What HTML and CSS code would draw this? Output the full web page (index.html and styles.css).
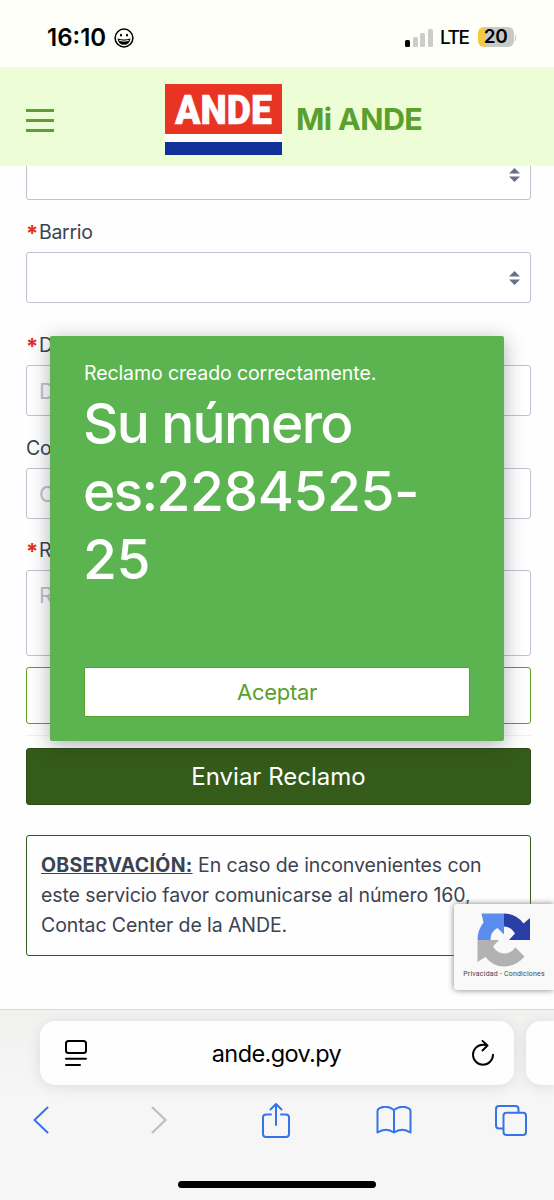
FILE: index.html
```html
<!DOCTYPE html>
<html lang="es">
<head>
    <meta charset="UTF-8">
    <meta name="viewport" content="width=device-width, initial-scale=1.0">
    <title>Mi ANDE</title>
    <link rel="stylesheet" href="styles.css">
</head>
<body>
    <div class="status-bar">
        <span class="time">16:10</span>
        <svg class="smile" width="20" height="20" viewBox="0 0 20 20">
            <circle cx="10" cy="10" r="8.9" fill="none" stroke="#000" stroke-width="1.5"/>
            <ellipse cx="7" cy="7.2" rx="1" ry="1.4"/>
            <ellipse cx="13" cy="7.2" rx="1" ry="1.4"/>
            <path d="M3.500 10.500 Q10 12.500 16.500 10.500 Q15.500 16.800 10 16.800 Q4.500 16.800 3.500 10.500Z"/>
            <path d="M5.200 12.400 Q10 14 14.800 12.400" fill="none" stroke="#fdfff8" stroke-width="1"/>
        </svg>
        <div class="signal"><i class="on"></i><i></i><i></i><i></i></div>
        <span class="network">LTE</span>
        <div class="battery">20</div>
        <div class="battery-tip"></div>
    </div>

    <header>
        <div class="menu"><span></span><span></span><span></span></div>
        <svg class="logo" width="117" height="71" viewBox="0 0 117 71">
            <rect width="117" height="71" fill="#fff"/>
            <rect width="117" height="50" fill="#e93323"/>
            <rect y="58" width="117" height="13" fill="#12309a"/>
            <text x="10" y="39.500" textLength="97" lengthAdjust="spacingAndGlyphs">ANDE</text>
        </svg>
        <h1>Mi ANDE</h1>
    </header>

    <main>
        <form>
            <div class="field cut"><svg class="arrows" width="11" height="14" viewBox="0 0 11 14"><path d="M0 5.500 L5.500 0 L11 5.500Z M0 8.500 L5.500 14 L11 8.500Z"/></svg></div>

            <label><b>*</b>Barrio</label>
            <div class="field"><svg class="arrows" width="11" height="14" viewBox="0 0 11 14"><path d="M0 5.500 L5.500 0 L11 5.500Z M0 8.500 L5.500 14 L11 8.500Z"/></svg></div>

            <label class="spaced"><b>*</b>D</label>
            <div class="field">D</div>

            <label>Co</label>
            <div class="field">C</div>

            <label class="last"><b>*</b>R</label>
            <div class="field area">R</div>

            <div class="attach"></div>
            <hr>
            <button type="button" class="send">Enviar Reclamo</button>
        </form>

        <p class="note"><b>OBSERVACIÓN:</b> En caso de inconvenientes con este servicio favor comunicarse al número 160, Contac Center de la ANDE.</p>

        <div class="modal">
            <p>Reclamo creado correctamente.</p>
            <h2>Su número es:<span>2284525-<br>25</span></h2>
            <button type="button">Aceptar</button>
        </div>

        <div class="captcha">
            <svg width="54" height="54" viewBox="0 0 54 54">
                <path fill="#5b8def" d="M27 .500 V21.500 L20.500 15 Q13.500 18.500 13.500 27 H.500 Q.500 17 6.500 9.500 L4.500 .500Z"/>
                <path fill="#2a3ea8" d="M27 .500 Q39 .500 46.500 10.500 L53 5 V27 H32 L38 20.500 Q34 13.500 27 13.500Z"/>
                <path fill="#b2b2b2" d="M.500 27 H22 L16 33.500 Q20.500 40.500 27 40.500 Q34 40.500 38.500 34.500 L47.500 43.500 Q39 53.500 27 53.500 Q15.500 53.500 8.500 44 L.500 49Z"/>
            </svg>
            <span>Privacidad - Condiciones</span>
        </div>
    </main>

    <footer>
        <div class="tabs">
            <div class="address">
                <svg width="22" height="27" viewBox="0 0 22 27" fill="none" stroke="#000" stroke-width="2" stroke-linecap="round">
                    <rect x="1" y="1" width="20" height="12" rx="2.500"/>
                    <path d="M1 18.700 H21 M1 25 H15"/>
                </svg>
                <span>ande.gov.py</span>
                <svg width="22" height="27" viewBox="0 0 22 27" fill="none" stroke="#000" stroke-width="1.900" stroke-linecap="round" stroke-linejoin="round">
                    <path d="M14.500 5.200 Q12.800 4.700 11 4.700 A10 10 0 1 0 21 14.700 M10.500 .900 L15.500 5.500 L10.500 10.500"/>
                </svg>
            </div>
            <div class="next-tab"></div>
        </div>
        <nav>
            <svg height="28" viewBox="0 0 16 28"><path d="M14.500 1.500 L1.500 14 L14.500 26.500"/></svg>
            <svg class="off" height="28" viewBox="0 0 16 28"><path d="M1.500 1.500 L14.500 14 L1.500 26.500"/></svg>
            <svg height="36" viewBox="0 0 28 36"><path d="M9 12.500 H4 Q1 12.500 1 15.500 V32 Q1 35 4 35 H24 Q27 35 27 32 V15.500 Q27 12.500 24 12.500 H19 M14 23 V2 M8.500 7.500 L14 2 L19.500 7.500"/></svg>
            <svg height="28" viewBox="0 0 35 28"><path d="M17.500 4 Q10 -1.800 2.500 2.500 Q1 3.300 1 5 V26.500 Q9.500 21 17.500 26.500 Q25.500 21 34 26.500 V5 Q34 3.300 32.500 2.500 Q25 -1.800 17.500 4 V26.500"/></svg>
            <svg height="31" viewBox="0 0 32 31"><path d="M8 23.500 H4 Q1 23.500 1 20.500 V4 Q1 1 4 1 H20.500 Q23.500 1 23.500 4 V7.500"/><rect x="8.500" y="7.800" width="22.500" height="22.200" rx="3"/></svg>
        </nav>
        <div class="home"></div>
    </footer>
</body>
</html>
```
FILE: styles.css
```css
* {
    box-sizing: border-box;
}

body {
    margin: 0;
    width: 554px;
    height: 1200px;
    overflow: hidden;
    display: flex;
    flex-direction: column;
    font-family: Inter, sans-serif;
    color: #3b4351;
    background-color: #fefefe;
}

.status-bar {
    height: 67px;
    padding: 8px 38px 0 47px;
    display: flex;
    align-items: center;
    color: #000;
    background-color: #fdfff8;
}

.time {
    font-size: 24px;
    font-weight: 600;
}

.smile {
    margin-left: 8px;
}

.signal {
    display: flex;
    align-items: flex-end;
    gap: 2.5px;
    margin-left: auto;
    margin-right: 7px;
}

.signal i {
    width: 5px;
    height: 10px;
    border-radius: 1.5px;
    background-color: #cccdc8;
}

.signal i.on {
    height: 7px;
    background-color: #000;
}

.signal i:nth-child(3) {
    height: 14px;
}

.signal i:nth-child(4) {
    height: 18px;
}

.network {
    font-size: 19px;
    font-weight: 500;
    letter-spacing: -1.4px;
}

.battery {
    width: 36px;
    height: 20px;
    margin-left: 9px;
    margin-top: -1px;
    border-radius: 6px;
    background: linear-gradient(to right, #f6c944 7px, #c8c9c4 7px);
    font-size: 19px;
    font-weight: 600;
    line-height: 20px;
    letter-spacing: -0.4px;
    text-align: center;
}

.battery-tip {
    width: 1.5px;
    height: 6px;
    margin-left: 1px;
    border-radius: 0 2px 2px 0;
    background-color: #c8c9c4;
}

header {
    height: 99px;
    padding: 0 25px 0 26px;
    display: flex;
    align-items: center;
    background-color: #edfdd6;
}

.menu {
    width: 28px;
    display: grid;
    gap: 7px;
    padding-top: 7px;
}

.menu span {
    height: 3px;
    background-color: #5f9e34;
}

.logo {
    margin: 6px 14px 0 111px;
}

.logo text {
    font-family: Roboto, sans-serif;
    font-size: 40px;
    font-weight: 900;
    fill: #fff;
    stroke: #fff;
    stroke-width: 0.5px;
}

h1 {
    margin: 3px 0 0;
    font-size: 30.5px;
    font-weight: 700;
    letter-spacing: -0.6px;
    color: #5aa02c;
}

main {
    position: relative;
    height: 843px;
    padding: 0 23px 0 26px;
    overflow: hidden;
}

form {
    display: flex;
    flex-direction: column;
}

label {
    height: 30px;
    margin: 17px 0 5px;
    font-size: 19.5px;
    line-height: 30px;
    letter-spacing: -0.3px;
}

label.spaced {
    margin-top: 27px;
}

label.last {
    margin-top: 16px;
}

label b {
    margin-right: 1px;
    color: #e0301e;
    font-size: 22px;
    font-weight: 700;
    line-height: 20px;
    vertical-align: -2px;
}

.field {
    height: 51px;
    padding: 0 12px;
    border: 1.5px solid #bcc3ce;
    border-radius: 3px;
    display: flex;
    align-items: center;
    font-size: 22px;
    color: #bcc3ce;
    background-color: #fff;
}

.field.cut {
    margin-top: -17px;
}

.field.area {
    height: 86px;
    padding-top: 11px;
    align-items: flex-start;
}

.arrows {
    margin-left: auto;
    margin-right: -2px;
    fill: #667189;
}

.attach {
    height: 57px;
    margin-top: 11px;
    border: 1.5px solid #5aa02c;
    border-radius: 3px;
}

hr {
    width: 100%;
    margin: 11px 0 12px;
    border: none;
    border-top: 1px solid #eef0f3;
}

.send {
    height: 57px;
    border: 1.5px solid #2c4d15;
    border-radius: 3px;
    font-family: inherit;
    font-size: 24px;
    color: #fff;
    background-color: #355b1a;
}

.note {
    height: 121px;
    margin: 30px 0 0;
    padding: 14px 14px;
    border: 1.5px solid #355b1a;
    border-radius: 3px;
    font-size: 19.5px;
    line-height: 30px;
    letter-spacing: -0.1px;
}

.note b {
    letter-spacing: 0.3px;
    text-decoration: underline;
}

.modal {
    position: absolute;
    left: 50px;
    top: 170px;
    width: 454px;
    height: 405px;
    padding: 22px 34px 24px;
    display: flex;
    flex-direction: column;
    border-radius: 2px;
    color: #fff;
    background-color: #5cb450;
    box-shadow: 0 4px 20px rgba(30, 30, 50, 0.35);
}

.modal p {
    margin: 0;
    font-size: 19.5px;
    line-height: 30px;
    letter-spacing: -0.1px;
}

.modal h2 {
    margin: 1px 0 0 -1px;
    font-size: 55px;
    font-weight: 500;
    line-height: 68px;
    letter-spacing: -1.7px;
}

.modal h2 span {
    letter-spacing: -0.4px;
}

.modal button {
    height: 50px;
    margin-top: auto;
    border: 1px solid #5aa02c;
    border-radius: 2px;
    font-family: inherit;
    font-size: 22px;
    letter-spacing: -0.3px;
    color: #5aa02c;
    background-color: #fff;
}

.captcha {
    position: absolute;
    right: 0;
    top: 738px;
    width: 100px;
    height: 86px;
    padding-top: 9px;
    display: flex;
    flex-direction: column;
    align-items: center;
    border-radius: 3px 0 0 3px;
    background-color: #f9f9f9;
    box-shadow: 0 0 6px #808080;
}

.captcha span {
    margin-top: 3px;
    font-family: Roboto, sans-serif;
    font-size: 7px;
    line-height: 8px;
    letter-spacing: 0.2px;
    white-space: nowrap;
    color: #444;
}

footer {
    height: 191px;
    border-top: 1px solid #d9d9d9;
    background: linear-gradient(#f1f1f0, #f6f6f6 90px);
}

.tabs {
    display: flex;
    gap: 12px;
    padding: 11px 0 0 40px;
}

.address,
.next-tab {
    height: 64px;
    background-color: #fefefe;
    box-shadow: 0 2px 14px rgba(0, 0, 0, 0.1);
}

.address {
    width: 474px;
    padding: 0 20px 0 25px;
    display: flex;
    align-items: center;
    justify-content: space-between;
    border-radius: 15px;
    font-size: 23.5px;
    letter-spacing: -0.6px;
    color: #000;
}

.address span {
    margin-right: 6px;
}

.next-tab {
    flex: 1;
    border-radius: 15px 0 0 15px;
}

nav {
    display: flex;
    align-items: center;
    justify-content: space-between;
    height: 36px;
    margin-top: 17px;
    padding: 0 25px 0 23px;
}

nav svg {
    width: 36px;
    fill: none;
    stroke: #3574e8;
    stroke-width: 2;
    stroke-linecap: round;
    stroke-linejoin: round;
}

nav svg.off {
    stroke: #bdbdbd;
}

.home {
    width: 198px;
    height: 7px;
    margin: 43px auto 0;
    border-radius: 4px;
    background-color: #000;
}
```
